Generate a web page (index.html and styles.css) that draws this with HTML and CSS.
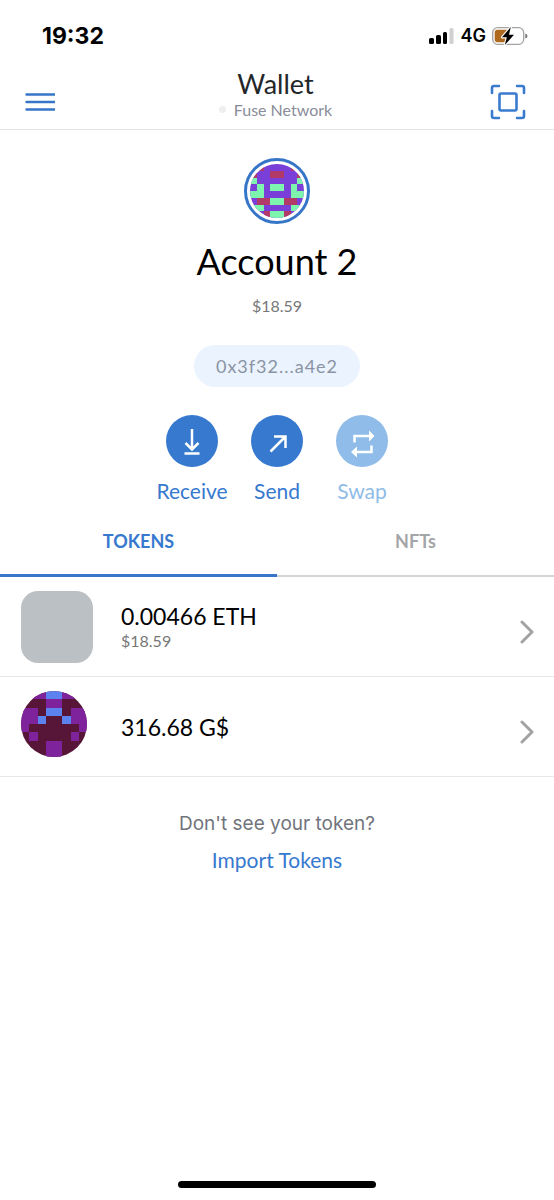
FILE: index.html
```html
<!DOCTYPE html>
<html lang="en">
<head>
<meta charset="utf-8">
<meta name="viewport" content="width=device-width, initial-scale=1">
<title>Wallet</title>
<link rel="stylesheet" href="styles.css">
</head>
<body>
<div class="screen">
  <div class="status-bar">
    <time class="clock">19:32</time>
    <div class="status-icons">
      <svg class="signal" width="26" height="16" viewBox="0 0 26 16" aria-hidden="true">
        <rect x="0" y="10" width="5" height="6" rx="1.5"/><rect x="7" y="7" width="5" height="9" rx="1.5"/><rect x="14" y="4" width="4" height="12" rx="1.5"/><rect x="20.5" y="0" width="4" height="16" rx="1.5" fill="#d0d0d0"/>
      </svg>
      <span class="carrier">4G</span>
      <svg width="36" height="20" viewBox="0 0 36 20" aria-hidden="true">
        <rect x="0.7" y="1.7" width="31" height="16.6" rx="5" fill="#fff" stroke="#a3a3a3" stroke-width="1.3"/>
        <path d="M5.5 3.7H15V16.3H5.5Q2.7 16.3 2.7 13.5V6.5Q2.7 3.7 5.5 3.7Z" fill="#b06a20"/>
        <path d="M33.3 7.5Q35.5 8 35.5 10T33.3 12.5Z" fill="#777"/>
        <path d="M18.8 1L10 11.3H14.8L12.8 19L22 8.7H17Z" fill="#000" stroke="#fff" stroke-width="2.2" stroke-linejoin="round" paint-order="stroke"/>
      </svg>
    </div>
  </div>

  <header class="header">
    <button class="icon-button" type="button" aria-label="Menu">
      <svg width="30" height="20" viewBox="0 0 30 20"><path d="M1.500 2.500H29.500M1.500 10H29.500M1.500 17.500H29.500" stroke="#3675c8" stroke-width="2.400" stroke-linecap="round"/></svg>
    </button>
    <div class="header-title">
      <h1>Wallet</h1>
      <p class="network"><span class="dot"></span>Fuse Network</p>
    </div>
    <button class="icon-button" type="button" aria-label="Scan code">
      <svg width="36" height="36" viewBox="0 0 36 36" fill="none" stroke="#3a7bd0" stroke-width="2.600" stroke-linecap="round" stroke-linejoin="round"><path d="M2 9V4Q2 2 4 2H9M27 2H32Q34 2 34 4V9M34 27V32Q34 34 32 34H27M9 34H4Q2 34 2 32V27"/><rect x="9.500" y="9.500" width="17" height="17" rx="1.500"/></svg>
    </button>
  </header>

  <main>
    <section class="account">
      <button class="avatar-ring" type="button" aria-label="Switch account">
        <svg class="avatar" viewBox="0 0 8 8" shape-rendering="crispEdges">
          <path fill="#7a3fd8" d="M0 0H8V8H0Z"/>
          <path fill="#b23a68" d="M1 0H2V1H1ZM6 0H7V1H6ZM3 1H5V2H3ZM0 1H1V2H0ZM7 1H8V2H7ZM1 5H3V6H1ZM5 5H7V6H5ZM2 7H3V8H2ZM5 7H6V8H5Z"/>
          <path fill="#7df5ae" d="M0 2H1V3H0ZM7 2H8V3H7ZM1 3H2V5H0V4H1ZM6 3H7V4H8V5H6ZM3 3H5V4H3ZM3 5H5V6H3ZM0 6H2V7H0ZM6 6H8V7H6ZM3 7H5V8H3Z"/>
        </svg>
      </button>
      <h2>Account 2</h2>
      <p class="balance">$18.59</p>
      <button class="address" type="button">0x3f32...a4e2</button>
      <div class="actions">
        <button class="action" type="button">
          <span class="action-icon"><svg viewBox="0 0 52 52"><path d="M26 14V34M19.500 28L26 34.500L32.500 28M18.500 38.500H33.500"/></svg></span>Receive
        </button>
        <button class="action" type="button">
          <span class="action-icon"><svg viewBox="0 0 52 52"><path d="M19.500 36.500L34 22M23 21.500H34.500V33"/></svg></span>Send
        </button>
        <button class="action" type="button" disabled>
          <span class="action-icon"><svg viewBox="0 0 52 52"><path d="M18.500 27.500V21H34M35.500 30.500V37H20"/><path class="solid" d="M33 15.500L38.500 21L33 26.500ZM21 31.500L15 37L21 42.500Z"/></svg></span>Swap
        </button>
      </div>
    </section>

    <div class="tabs" role="tablist">
      <button class="tab" type="button" role="tab" aria-selected="true">TOKENS</button>
      <button class="tab" type="button" role="tab" aria-selected="false">NFTs</button>
    </div>

    <ul class="tokens">
      <li><a class="token" href="#eth">
        <span class="token-image"><span class="placeholder"></span></span>
        <span class="token-text"><span class="amount">0.00466 ETH</span><span class="fiat">$18.59</span></span>
        <svg class="chevron" width="14" height="24" viewBox="0 0 14 24"><path d="M2 2L12 12L2 22"/></svg>
      </a></li>
      <li><a class="token" href="#gd">
        <span class="token-image"><svg class="token-avatar" viewBox="0 0 8 8" shape-rendering="crispEdges">
          <path fill="#571638" d="M0 0H8V8H0Z"/>
          <path fill="#7e239c" d="M0 0H3V1H0ZM5 0H8V1H5ZM3 1H5V2H3ZM0 2H2V4H1V5H0ZM6 2H8V5H7V4H6ZM1 5H2V6H1ZM6 5H7V6H6ZM3 6H5V8H3Z"/>
          <path fill="#5b82ee" d="M3 0H5V1H3ZM3 2H5V3H3ZM2 3H3V4H2ZM5 3H6V4H5Z"/>
        </svg></span>
        <span class="token-text"><span class="amount">316.68 G$</span></span>
        <svg class="chevron" width="14" height="24" viewBox="0 0 14 24"><path d="M2 2L12 12L2 22"/></svg>
      </a></li>
    </ul>

    <div class="import">
      <p>Don't see your token?</p>
      <a href="#import">Import Tokens</a>
    </div>
  </main>
  <div class="home-indicator"></div>
</div>
</body>
</html>
```
FILE: styles.css
```css
* { box-sizing: border-box; }
body { margin: 0; background: #fff; color: #000; font-family: Lato, "Open Sans", sans-serif; }
h1, h2, p, ul { margin: 0; padding: 0; font-weight: 400; }
ul { list-style: none; }
button { border: 0; padding: 0; background: none; color: inherit; font: inherit; }
a { color: inherit; text-decoration: none; }
svg { display: block; }

.screen { min-height: 100vh; display: flex; flex-direction: column; }
main { flex: 1; }

.status-bar { height: 70px; padding: 2px 26px 0 42px; display: flex; align-items: center; justify-content: space-between; font-family: Inter, sans-serif; }
.clock { font-size: 23px; font-weight: 700; line-height: 28px; }
.status-icons { display: flex; align-items: center; gap: 6px; }
.carrier { font-size: 18px; font-weight: 600; line-height: 24px; }

.header { height: 60px; padding: 0 28px 0 25px; display: flex; align-items: center; justify-content: space-between; border-bottom: 1px solid #e4e5e8; }
.icon-button { width: 36px; height: 36px; display: grid; align-items: center; margin-top: 4px; }
.header-title { padding-bottom: 10px; text-align: center; }
.header h1 { font-size: 27px; line-height: 30px; color: #24272a; }
.network { display: flex; align-items: center; justify-content: center; gap: 8px; font-size: 16px; line-height: 22px; color: #8a8c99; }
.dot { width: 7px; height: 7px; border-radius: 50%; background: #eeeff0; }

.account { padding-top: 28px; display: flex; flex-direction: column; align-items: center; }
.avatar-ring { width: 66px; height: 66px; border: 3px solid #3675c8; border-radius: 50%; padding: 3px; }
.avatar { width: 100%; border-radius: 50%; }
.account h2 { margin-top: 15px; font-size: 36px; line-height: 44px; }
.balance { margin-top: 11px; font-size: 16px; line-height: 24px; color: #777; }
.address { margin-top: 27px; height: 42px; padding: 0 22px; border-radius: 21px; background: #eaf3fe; color: #8b94a3; font-size: 18px; letter-spacing: 1px; }
.actions { margin-top: 28px; display: grid; grid-template-columns: repeat(3, 85px); }
.action { display: flex; flex-direction: column; align-items: center; gap: 11px; font-size: 21px; line-height: 26px; color: #3679cf; }
.action-icon { width: 52px; height: 52px; border-radius: 50%; background: #3679cf; }
.action path { fill: none; stroke: #fff; stroke-width: 2.5; }
.action .solid { fill: #fff; stroke: none; }
.action:disabled { color: #8fbce8; }
.action:disabled .action-icon { background: #8fbce8; }

.tabs { margin-top: 13px; display: grid; grid-template-columns: 1fr 1fr; }
.tab { height: 60px; padding-bottom: 10px; border-bottom: 2px solid #d3d4d6; color: #a4a5a7; font-size: 18px; font-weight: 700; }
.tab[aria-selected="true"] { border-bottom: 3px solid #3675c8; color: #3679cf; }

.token { min-height: 100px; padding: 14px 20px 13px 21px; display: flex; align-items: center; border-bottom: 1px solid #e6e7e9; }
.token-image { width: 100px; align-self: flex-start; }
.placeholder { display: block; width: 72px; height: 72px; border-radius: 17px; background: #bbc0c5; }
.token-avatar { width: 66px; height: 66px; border-radius: 50%; }
.token-text { flex: 1; display: flex; flex-direction: column; }
.amount { font-size: 23px; line-height: 28px; }
.fiat { font-size: 16px; line-height: 22px; color: #777; }
.chevron { margin-top: 9px; fill: none; stroke: #a3a3a3; stroke-width: 3; stroke-linecap: round; stroke-linejoin: round; }

.import { padding-top: 33px; display: flex; flex-direction: column; align-items: center; gap: 8px; font-size: 21px; line-height: 28px; }
.import p { color: #71747c; font-family: Inter, sans-serif; font-size: 19px; }
.import a { color: #3679cf; }
.home-indicator { width: 198px; height: 7px; margin: 0 auto 12px; border-radius: 4px; background: #000; }
```
